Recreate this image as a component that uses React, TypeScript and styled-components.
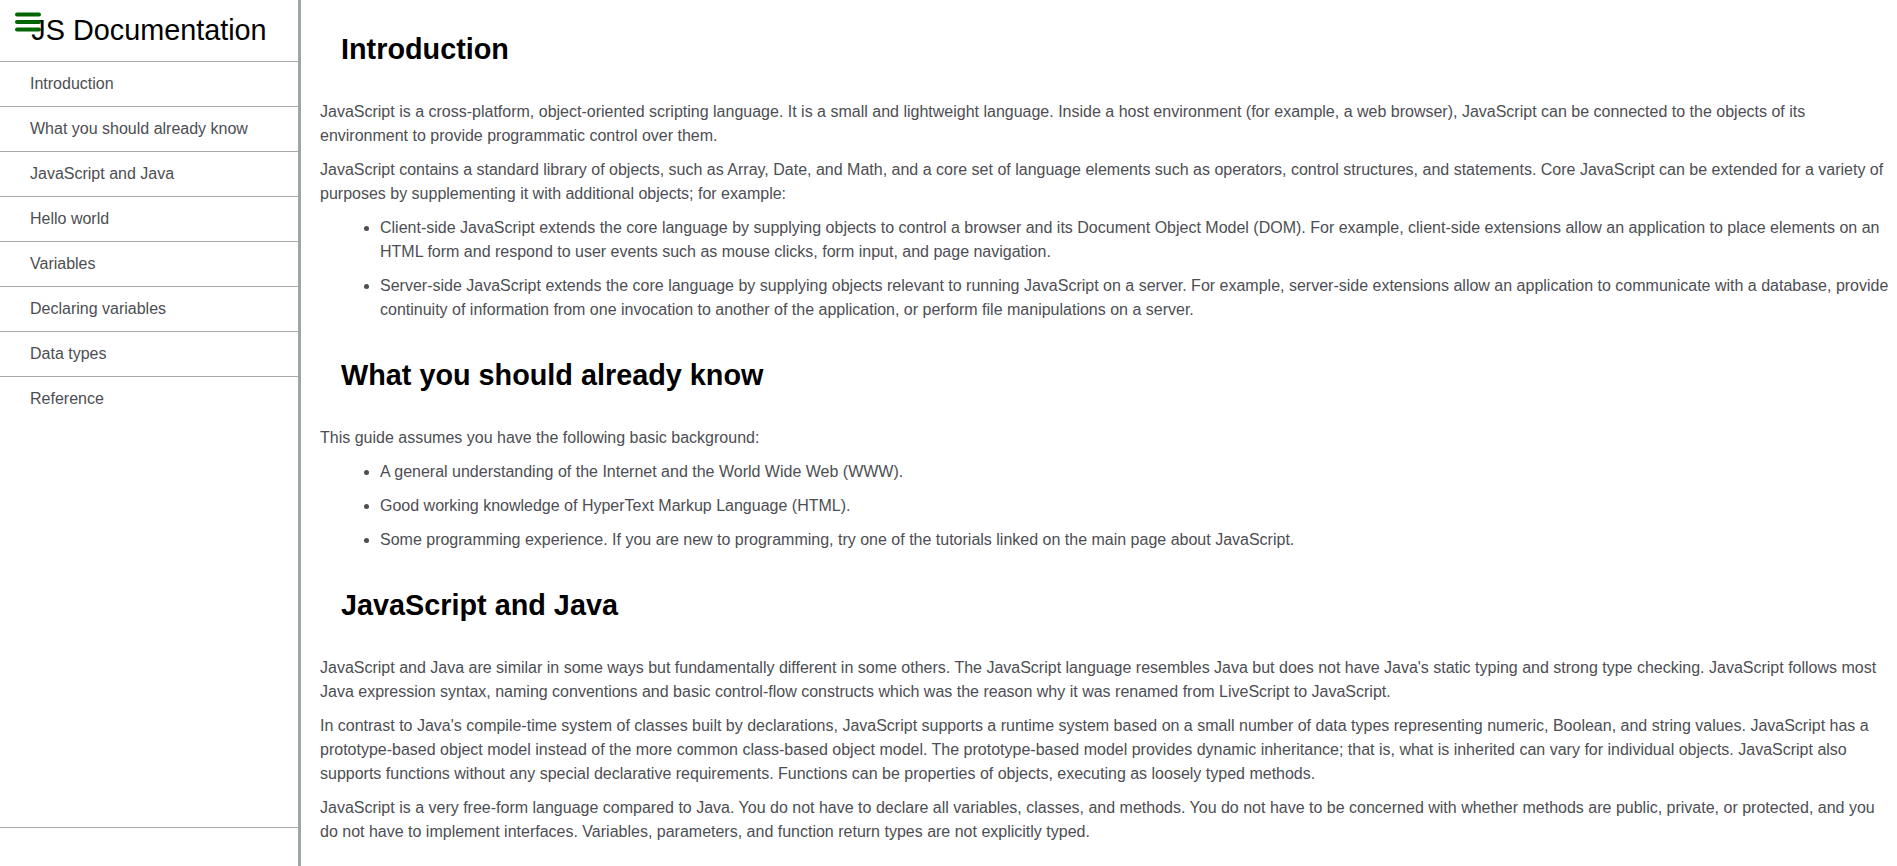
import React from "react";
import styled, { createGlobalStyle } from "styled-components";

const GlobalStyle = createGlobalStyle`
  html, body {
    margin: 0;
    padding: 0;
    height: 100%;
    overflow: hidden;
    background: #ffffff;
  }
  body {
    font-family: "Liberation Sans", Arial, sans-serif;
  }
  * { box-sizing: border-box; }
`;

const Page = styled.div`
  display: grid;
  grid-template-columns: 301px 1fr;
  height: 100vh;
  overflow: hidden;
`;

const Navbar = styled.nav`
  position: relative;
  border-right: 3px solid rgb(160, 166, 166);
  height: 100vh;
  display: flex;
  flex-direction: column;
`;

const NavHeader = styled.header`
  margin: 0;
  padding: 14px 0 14px;
  height: 61px;
  text-align: center;
  font-size: 28.8px;
  line-height: 33px;
  font-weight: normal;
  color: #000000;
`;

const MenuIcon = styled.svg`
  position: absolute;
  left: 15px;
  top: 12px;
  width: 26px;
  height: 20px;
`;

const NavList = styled.ul`
  list-style: none;
  margin: 0;
  padding: 0;
  height: 767px;
  border-bottom: 1px solid #a9a9a9;
`;

const NavItem = styled.li`
  border-top: 1px solid #a9a9a9;
  width: 100%;
`;

const NavLink = styled.a`
  display: block;
  padding: 10px 30px;
  font-size: 16px;
  line-height: 24px;
  color: #4d4e53;
  text-decoration: none;
  cursor: pointer;
`;

const Main = styled.main`
  padding: 0 8px 0 19px;
  overflow: hidden;
  height: 100vh;
`;

const Section = styled.section`
  margin: 0;
`;

const SectionHeader = styled.header<{ $first?: boolean }>`
  margin: 0;
  padding: ${(p) => (p.$first ? "33px" : "37px")} 0 34px 21px;
  font-size: 28.8px;
  line-height: 33px;
  font-weight: bold;
  color: #000000;
`;

const Article = styled.article`
  color: #4d4e53;
  font-size: 16px;
  line-height: 24px;
`;

const Para = styled.p`
  margin: 0 0 10px;
`;

const List = styled.ul`
  margin: 0;
  padding-left: 40px;
`;

const ListItem = styled.li`
  margin: 10px 0 0 20px;
`;

const navItems = [
  "Introduction",
  "What you should already know",
  "JavaScript and Java",
  "Hello world",
  "Variables",
  "Declaring variables",
  "Data types",
  "Reference",
];

export default function App() {
  return (
    <>
      <GlobalStyle />
      <Page>
        <Navbar id="navbar">
          <MenuIcon viewBox="0 0 26 20" aria-hidden="true">
            <line x1="2" y1="2.5" x2="24" y2="2.5" stroke="#006400" strokeWidth="4" strokeLinecap="round" />
            <line x1="2" y1="10" x2="24" y2="10" stroke="#006400" strokeWidth="4" strokeLinecap="round" />
            <line x1="2" y1="17.5" x2="24" y2="17.5" stroke="#006400" strokeWidth="4" strokeLinecap="round" />
          </MenuIcon>
          <NavHeader>JS Documentation</NavHeader>
          <NavList>
            {navItems.map((item) => (
              <NavItem key={item}>
                <NavLink href={"#" + item.replace(/ /g, "_")}>{item}</NavLink>
              </NavItem>
            ))}
          </NavList>
        </Navbar>
        <Main id="main-doc">
          <Section id="Introduction">
            <SectionHeader $first>Introduction</SectionHeader>
            <Article>
              <Para>
                JavaScript is a cross-platform, object-oriented scripting language. It is a small and lightweight language. Inside a host environment (for example, a web browser), JavaScript can be connected to the objects of its environment to provide programmatic control over them.
              </Para>
              <Para>
                JavaScript contains a standard library of objects, such as Array, Date, and Math, and a core set of language elements such as operators, control structures, and statements. Core JavaScript can be extended for a variety of purposes by supplementing it with additional objects; for example:
              </Para>
              <List>
                <ListItem>
                  Client-side JavaScript extends the core language by supplying objects to control a browser and its Document Object Model (DOM). For example, client-side extensions allow an application to place elements on an HTML form and respond to user events such as mouse clicks, form input, and page navigation.
                </ListItem>
                <ListItem>
                  Server-side JavaScript extends the core language by supplying objects relevant to running JavaScript on a server. For example, server-side extensions allow an application to communicate with a database, provide continuity of information from one invocation to another of the application, or perform file manipulations on a server.
                </ListItem>
              </List>
            </Article>
          </Section>
          <Section id="What_you_should_already_know">
            <SectionHeader>What you should already know</SectionHeader>
            <Article>
              <Para>This guide assumes you have the following basic background:</Para>
              <List>
                <ListItem>A general understanding of the Internet and the World Wide Web (WWW).</ListItem>
                <ListItem>Good working knowledge of HyperText Markup Language (HTML).</ListItem>
                <ListItem>
                  Some programming experience. If you are new to programming, try one of the tutorials linked on the main page about JavaScript.
                </ListItem>
              </List>
            </Article>
          </Section>
          <Section id="JavaScript_and_Java">
            <SectionHeader>JavaScript and Java</SectionHeader>
            <Article>
              <Para>
                JavaScript and Java are similar in some ways but fundamentally different in some others. The JavaScript language resembles Java but does not have Java's static typing and strong type checking. JavaScript follows most Java expression syntax, naming conventions and basic control-flow constructs which was the reason why it was renamed from LiveScript to JavaScript.
              </Para>
              <Para>
                In contrast to Java's compile-time system of classes built by declarations, JavaScript supports a runtime system based on a small number of data types representing numeric, Boolean, and string values. JavaScript has a prototype-based object model instead of the more common class-based object model. The prototype-based model provides dynamic inheritance; that is, what is inherited can vary for individual objects. JavaScript also supports functions without any special declarative requirements. Functions can be properties of objects, executing as loosely typed methods.
              </Para>
              <Para>
                JavaScript is a very free-form language compared to Java. You do not have to declare all variables, classes, and methods. You do not have to be concerned with whether methods are public, private, or protected, and you do not have to implement interfaces. Variables, parameters, and function return types are not explicitly typed.
              </Para>
            </Article>
          </Section>
        </Main>
      </Page>
    </>
  );
}
